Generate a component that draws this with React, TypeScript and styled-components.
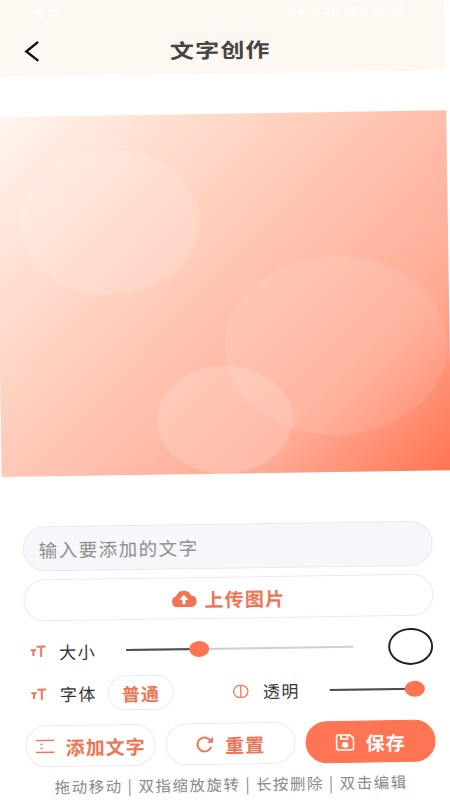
import React from 'react';
import styled, { createGlobalStyle } from 'styled-components';

const FONT = '"Noto Sans CJK SC", "Liberation Sans", sans-serif';
const ORANGE = '#FF7452';
const ORANGE_TEXT = '#EE7556';
const BORDER = '#EFEAE7';

const GlobalStyle = createGlobalStyle`
  html, body {
    margin: 0;
    height: 100%;
    overflow: hidden;
    background: #fff;
  }
`;

// the whole capture is very slightly tilted
const Screen = styled.div`
  width: 450px;
  height: 810px;
  background: #fff;
  font-family: ${FONT};
  transform: translate(-5.5px, 0) rotate(-0.85deg);
  transform-origin: 0 0;
`;

const Header = styled.header`
  height: 77px;
  box-sizing: border-box;
  background: #fef8f3;
  position: relative;
`;

const StatusBar = styled.div`
  display: flex;
  justify-content: space-between;
  height: 28px;
  padding: 6px 40px 0 38px;
  box-sizing: border-box;
  color: #fff;
  font-size: 11px;
  line-height: 16px;
  letter-spacing: 1px;
`;

const TitleRow = styled.div`
  display: flex;
  align-items: center;
  justify-content: center;
  height: 48px;
`;

const Title = styled.h1`
  margin: 0;
  font-size: 20px;
  font-weight: 700;
  letter-spacing: 1px;
  color: #444;
  transform: scaleX(1.2);
`;

const BackButton = styled.button`
  position: absolute;
  left: 27px;
  top: 39px;
  width: 20px;
  height: 26px;
  padding: 0;
  border: none;
  background: transparent;
  display: flex;
  align-items: center;
  justify-content: center;
`;

const Canvas = styled.div`
  position: relative;
  margin-top: 40px;
  height: 360px;
  overflow: hidden;
  background: linear-gradient(135deg, #fff6f1 0%, #ffdccd 25%, #ffc3b1 50%, #ffab95 76%, #ff7452 100%);
`;

const Bubble = styled.div<{ $l: number; $t: number; $w: number; $h: number; $a: number }>`
  position: absolute;
  left: ${p => p.$l}px;
  top: ${p => p.$t}px;
  width: ${p => p.$w}px;
  height: ${p => p.$h}px;
  border-radius: 50%;
  background: rgba(255, 255, 255, ${p => p.$a});
`;

const Controls = styled.section`
  display: flex;
  flex-direction: column;
  padding: 50px 20px 0;
`;

const TextInput = styled.input`
  height: 45px;
  box-sizing: border-box;
  padding: 0 15px;
  border: 1px solid #e9e9ec;
  border-radius: 23px;
  background: #f6f7fa;
  font-family: ${FONT};
  font-size: 18.5px;
  letter-spacing: 1.5px;
  outline: none;
  &::placeholder {
    color: #8e8e8e;
    opacity: 1;
  }
`;

const UploadButton = styled.button`
  height: 42px;
  margin-top: 8px;
  border: 1px solid ${BORDER};
  border-radius: 21px;
  background: #fff;
  display: flex;
  align-items: center;
  justify-content: center;
  gap: 8px;
  color: ${ORANGE_TEXT};
  font-family: ${FONT};
  font-size: 19px;
  font-weight: 700;
  letter-spacing: 1.2px;
`;

const SizeRow = styled.div`
  display: flex;
  align-items: center;
  height: 44px;
  margin-top: 8px;
  padding-left: 6px;
`;

const FontRow = styled.div`
  display: flex;
  align-items: center;
  height: 41px;
  padding-left: 6px;
`;

const Label = styled.span`
  margin-left: 13px;
  width: 37px;
  flex: none;
  font-size: 17px;
  letter-spacing: 1.5px;
  white-space: nowrap;
  color: #333;
`;

const Slider = styled.div<{ $w: number; $ml: number }>`
  position: relative;
  width: ${p => p.$w}px;
  margin-left: ${p => p.$ml}px;
  height: 2px;
  flex: none;
  background: #cfcfcf;
`;

const SliderFill = styled.div`
  height: 100%;
  background: #4d4a5a;
`;

const Thumb = styled.div`
  position: absolute;
  top: -7px;
  width: 20px;
  height: 16px;
  margin-left: -10px;
  border-radius: 50%;
  background: ${ORANGE};
`;

const Swatch = styled.div`
  width: 45px;
  height: 37px;
  margin-left: 35px;
  box-sizing: border-box;
  border: 2.5px solid #222;
  border-radius: 50%;
  background: #fff;
  flex: none;
`;

const FontPill = styled.button`
  width: 66px;
  height: 35px;
  margin-left: 11px;
  padding: 0;
  flex: none;
  border: 1px solid ${BORDER};
  border-radius: 18px;
  background: #fff;
  color: ${ORANGE_TEXT};
  font-family: ${FONT};
  font-size: 18px;
  font-weight: 700;
  letter-spacing: 1px;
`;

const OpacityIcon = styled.svg`
  margin-left: 59px;
  flex: none;
`;

const OpacityLabel = styled(Label)`
  margin-left: 14px;
`;

const Actions = styled.div`
  display: flex;
  gap: 10px;
  margin-top: 11px;
`;

const ActionButton = styled.button<{ $primary?: boolean }>`
  flex: 1;
  height: 42px;
  padding: 0;
  border: 1px solid ${p => (p.$primary ? ORANGE : BORDER)};
  border-radius: 21px;
  background: ${p => (p.$primary ? ORANGE : '#fff')};
  color: ${p => (p.$primary ? '#fff' : ORANGE_TEXT)};
  display: flex;
  align-items: center;
  justify-content: center;
  gap: 11px;
  font-family: ${FONT};
  font-size: 19px;
  font-weight: 700;
  letter-spacing: 1px;
  white-space: nowrap;
`;

const Tip = styled.p`
  margin: 8px 0 0;
  text-align: center;
  font-size: 15.5px;
  line-height: 22px;
  letter-spacing: 1.5px;
  white-space: nowrap;
  color: #8a8a8a;
`;

const TextSizeIcon: React.FC = () => (
  <svg width="16" height="14" viewBox="0 0 16 14" fill="none" stroke={ORANGE_TEXT} strokeWidth="2" style={{ flex: 'none' }}>
    <path d="M6.5 2.2H15.5M11 2.2V12.5" />
    <path d="M0.5 5.8H6M3.2 5.8V11.5" />
  </svg>
);

const App: React.FC = () => {
  return (
    <>
      <GlobalStyle />
      <Screen>
        <Header>
          <StatusBar>
            <span>图 字</span>
            <span>46 令 5G 98% 14:20</span>
          </StatusBar>
          <BackButton aria-label="返回">
            <svg width="18" height="22" viewBox="0 0 18 22" fill="none" stroke="#111" strokeWidth="2.4">
              <path d="M15 1.5 3 11l12 9.5" />
            </svg>
          </BackButton>
          <TitleRow>
            <Title>文字创作</Title>
          </TitleRow>
        </Header>

        <Canvas>
          <Bubble $l={22} $t={35} $w={180} $h={145} $a={0.14} />
          <Bubble $l={225} $t={144} $w={223} $h={179} $a={0.1} />
          <Bubble $l={156} $t={252} $w={136} $h={108} $a={0.17} />
        </Canvas>

        <Controls>
          <TextInput placeholder="输入要添加的文字" />
          <UploadButton>
            <svg width="25" height="17" viewBox="0 0 25 17">
              <path fill={ORANGE_TEXT} d="M6 17a5.6 5.6 0 0 1-1.2-11A8 8 0 0 1 19.6 5 6 6 0 0 1 19.5 17Z" />
              <path fill="#fff" d="M12.5 4.5 17 9.5h-3V14h-3V9.500H8Z" />
            </svg>
            上传图片
          </UploadButton>

          <SizeRow>
            <TextSizeIcon />
            <Label>大小</Label>
            <Slider $w={227} $ml={30}>
              <SliderFill style={{ width: '32%' }} />
              <Thumb style={{ left: '32%' }} />
            </Slider>
            <Swatch />
          </SizeRow>

          <FontRow>
            <TextSizeIcon />
            <Label>字体</Label>
            <FontPill>普通</FontPill>
            <OpacityIcon width="16" height="14" viewBox="0 0 16 14" fill="none" stroke={ORANGE_TEXT} strokeWidth="1.3">
              <ellipse cx="8" cy="7" rx="7.2" ry="6.2" />
              <path d="M8 1v12" />
            </OpacityIcon>
            <OpacityLabel>透明</OpacityLabel>
            <Slider $w={95} $ml={30}>
              <SliderFill style={{ width: '89%' }} />
              <Thumb style={{ left: '89%' }} />
            </Slider>
          </FontRow>

          <Actions>
            <ActionButton>
              <svg width="19" height="14" viewBox="0 0 19 14" fill="none" stroke={ORANGE_TEXT}>
                <path strokeWidth="1.5" d="M0 1h19M0 13h19" />
                <path strokeWidth="1.5" d="M5 5h2M5 9h2" />
              </svg>
              添加文字
            </ActionButton>
            <ActionButton>
              <svg width="18" height="17" viewBox="0 0 18 17" fill="none" stroke={ORANGE_TEXT} strokeWidth="2">
                <path d="M15.500 11a7 7 0 1 1-.8-6.500" />
                <path fill={ORANGE_TEXT} stroke="none" d="M17.500 1v6h-6Z" />
              </svg>
              重置
            </ActionButton>
            <ActionButton $primary>
              <svg width="19" height="17" viewBox="0 0 19 17" fill="none" stroke="#fff" strokeWidth="1.7">
                <path d="M1 3a2 2 0 0 1 2-2h11l4 3.500V14a2 2 0 0 1-2 2H3a2 2 0 0 1-2-2Z" />
                <path d="M5.500 1.500v3.500h6.500V1.500" />
                <ellipse cx="9.500" cy="11" rx="2.500" ry="2" fill="#fff" />
              </svg>
              保存
            </ActionButton>
          </Actions>

          <Tip>拖动移动 | 双指缩放旋转 | 长按删除 | 双击编辑</Tip>
        </Controls>
      </Screen>
    </>
  );
};

export default App;
